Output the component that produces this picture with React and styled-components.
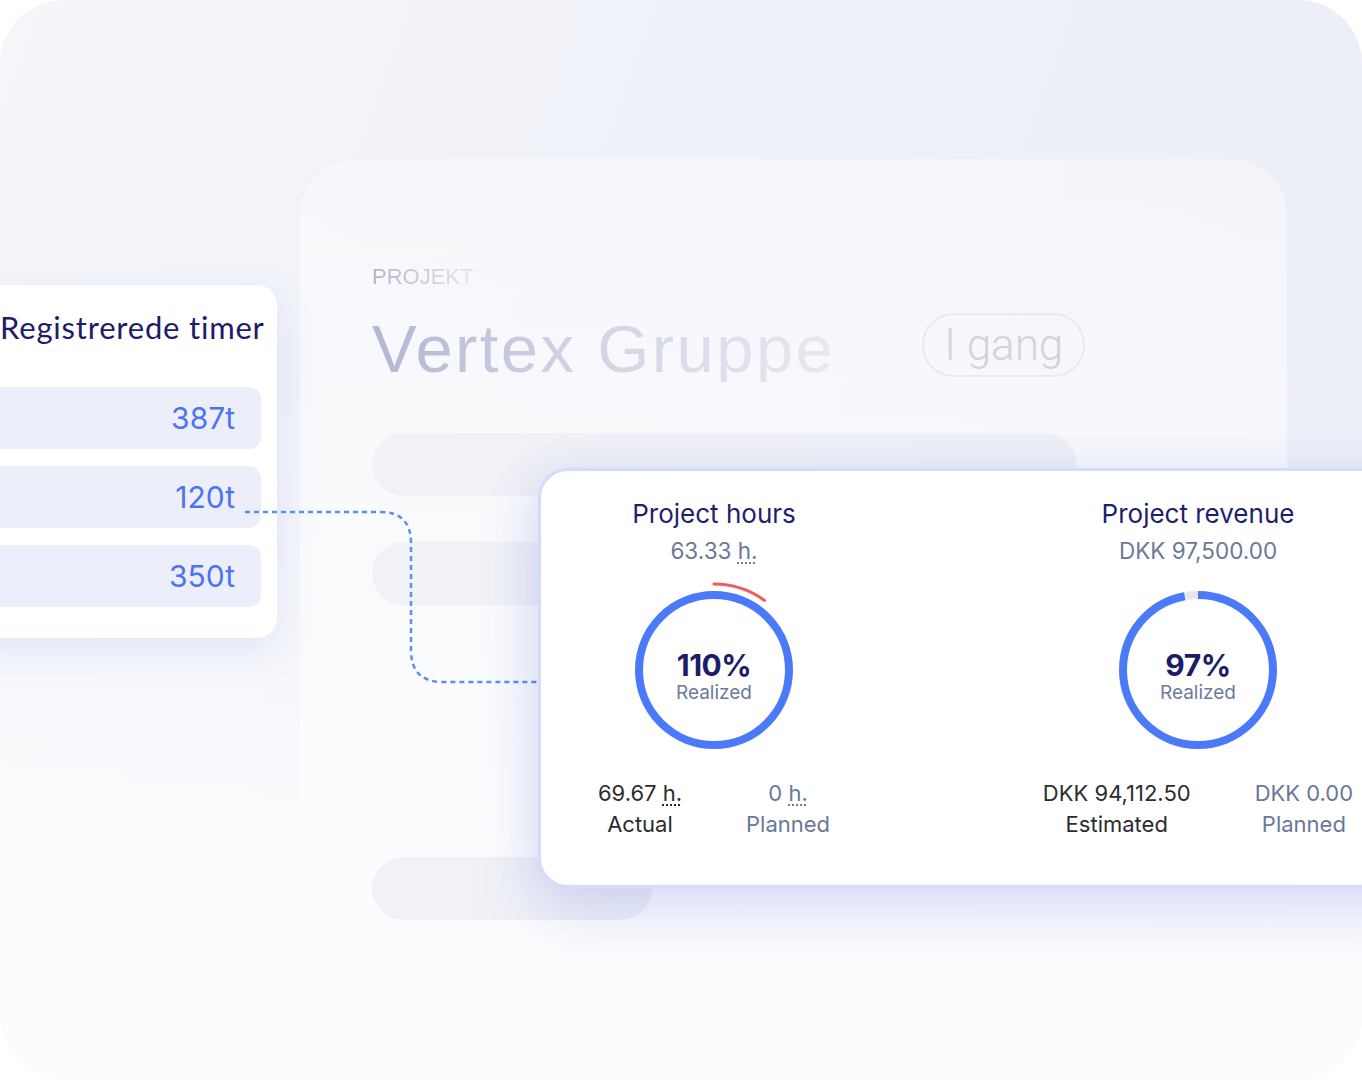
import React from 'react'
import styled, { createGlobalStyle } from 'styled-components'

const GlobalStyle = createGlobalStyle`
  html, body {
    margin: 0;
    padding: 0;
    background: #fff;
  }
  body {
    font-family: Inter, "Noto Sans", sans-serif;
  }
`

const Stage = styled.div`
  position: relative;
  width: 1362px;
  height: 1080px;
  overflow: hidden;
  background: #fff;
`

const Frame = styled.div`
  box-sizing: border-box;
  width: 100%;
  height: 100%;
  padding: 159px 0 0 300px;
  border-radius: 64px;
  overflow: hidden;
  background:
    linear-gradient(180deg, rgba(255,255,255,0) 35%, rgba(252,253,254,0.95) 85%),
    linear-gradient(110deg, #f4f6fa 0%, #eff1f8 40%, #eaedf7 100%);
`

const Sheet = styled.section`
  box-sizing: border-box;
  width: 987px;
  height: 1000px;
  padding: 105px 72px 0;
  border-radius: 56px 56px 0 0;
  background:
    linear-gradient(180deg, rgba(255,255,255,0) 0%, rgba(252,253,254,0.9) 70%),
    linear-gradient(100deg, #f7f8fb 0%, #f5f6fa 60%, #f2f4f9 100%);
`

const Eyebrow = styled.div`
  display: inline-block;
  font-family: "Liberation Sans", Arial, sans-serif;
  font-size: 22px;
  line-height: 26px;
  background: linear-gradient(90deg, #b2b4cf 0%, #e3e4ee 100%);
  -webkit-background-clip: text;
  background-clip: text;
  color: transparent;
`

const TitleRow = styled.div`
  display: flex;
  align-items: center;
  gap: 87px;
  margin-top: 23px;
  height: 64px;
`

const Title = styled.h1`
  margin: 0;
  font-family: "Liberation Sans", Arial, sans-serif;
  font-weight: 400;
  font-size: 67px;
  letter-spacing: 2.4px;
  line-height: 1;
  padding-top: 6px;
  background: linear-gradient(90deg, #b4b6d4 0%, #d2d3e4 45%, #e7e8f1 100%);
  -webkit-background-clip: text;
  background-clip: text;
  color: transparent;
`

const StatusPill = styled.span`
  box-sizing: border-box;
  display: flex;
  align-items: center;
  justify-content: center;
  width: 163px;
  height: 64px;
  border: 2px solid #e9eaf0;
  border-radius: 32px;
  font-family: Roboto, "Open Sans", sans-serif;
  font-weight: 300;
  font-size: 44px;
  color: #d3d4db;
`

const Skeleton = styled.div`
  width: ${p => p.$w}px;
  height: 63px;
  margin-top: ${p => p.$mt}px;
  border-radius: 32px;
  background: linear-gradient(90deg, #f1f2f7 0%, #eef0f6 100%);
`

const TimesPanel = styled.aside`
  position: absolute;
  left: -40px;
  top: 285px;
  box-sizing: border-box;
  width: 317px;
  height: 353px;
  padding: 22px 10px 0 40px;
  border-radius: 20px;
  background: #fff;
  box-shadow: 0 14px 40px rgba(96, 114, 214, 0.13);
`

const PanelTitle = styled.h2`
  margin: 0 0 40px;
  font-family: Lato, "Noto Sans", sans-serif;
  font-weight: 400;
  font-size: 31px;
  letter-spacing: 0.8px;
  line-height: 40px;
  color: #1d1c6a;
  white-space: nowrap;
`

const HourList = styled.div`
  display: flex;
  flex-direction: column;
  gap: 17px;
  margin-left: -14px;
  margin-right: 6px;
`

const HourRow = styled.div`
  display: flex;
  align-items: center;
  justify-content: flex-end;
  height: 62px;
  padding-right: 26px;
  border-radius: 12px;
  background: #eceff9;
  font-size: 30px;
  color: #4b73f6;
`

const Connector = styled.svg`
  position: absolute;
  left: 0;
  top: 0;
  pointer-events: none;
`

const Card = styled.div`
  position: absolute;
  left: 538px;
  top: 468px;
  box-sizing: border-box;
  width: 900px;
  height: 420px;
  padding-top: 27px;
  border: 3px solid #d3dcfc;
  border-radius: 30px;
  background: #fff;
  box-shadow: 0 26px 60px rgba(86, 104, 214, 0.18), -10px 0 40px rgba(86, 104, 214, 0.08);
  display: grid;
  grid-template-columns: 346px 346px;
  column-gap: 138px;
  align-content: start;
`

const Column = styled.div`
  display: flex;
  flex-direction: column;
  align-items: center;
`

const ColTitle = styled.div`
  font-size: 26px;
  line-height: 32px;
  color: #1f1f6d;
`

const ColTotal = styled.div`
  margin-top: 6px;
  font-size: 22.5px;
  line-height: 30px;
  color: #6b7898;
`

const Unit = styled.span`
  text-decoration: underline dotted;
  text-decoration-thickness: 2px;
  text-underline-offset: 3px;
`

const RingWrap = styled.div`
  display: grid;
  place-items: center;
  width: 180px;
  height: 180px;
  margin-top: 14px;
  & > * {
    grid-area: 1 / 1;
  }
`

const RingLabel = styled.div`
  display: flex;
  flex-direction: column;
  align-items: center;
  margin-top: 16px;
`

const Percent = styled.div`
  font-size: 30px;
  font-weight: 700;
  line-height: 30px;
  letter-spacing: -0.5px;
  color: #1d1c66;
`

const Realized = styled.div`
  font-size: 19px;
  line-height: 26px;
  color: #6d7a9b;
`

const StatRow = styled.div`
  display: flex;
  justify-content: center;
  gap: 64px;
  margin-top: 18px;
`

const Stat = styled.div`
  display: flex;
  flex-direction: column;
  align-items: center;
  font-size: 22px;
  line-height: 31px;
  color: ${p => (p.$muted ? '#6b7898' : '#2c2c30')};
  white-space: nowrap;
`

const R = 75
const CIRC = 2 * Math.PI * R

function Ring({ value }) {
  const shown = Math.min(value, 100)
  const over = Math.max(value - 100, 0)
  const angle = (over / 100) * 2 * Math.PI
  const ex = 90 + 86 * Math.sin(angle)
  const ey = 90 - 86 * Math.cos(angle)
  return (
    <svg width="180" height="180" viewBox="0 0 180 180">
      <circle cx="90" cy="90" r={R} fill="none" stroke="#e6e8f0" strokeWidth="8" />
      <circle
        cx="90"
        cy="90"
        r={R}
        fill="none"
        stroke="#4a7af8"
        strokeWidth="8"
        strokeDasharray={`${(shown / 100) * CIRC} ${CIRC}`}
        transform="rotate(-90 90 90)"
      />
      {over > 0 && (
        <path
          d={`M90 4 A86 86 0 0 1 ${ex.toFixed(2)} ${ey.toFixed(2)}`}
          fill="none"
          stroke="#f25a5e"
          strokeWidth="3"
          strokeLinecap="round"
        />
      )}
    </svg>
  )
}

function Metric({ title, total, value, stats }) {
  return (
    <Column>
      <ColTitle>{title}</ColTitle>
      <ColTotal>{total}</ColTotal>
      <RingWrap>
        <Ring value={value} />
        <RingLabel>
          <Percent>{value}%</Percent>
          <Realized>Realized</Realized>
        </RingLabel>
      </RingWrap>
      <StatRow>
        {stats.map(s => (
          <Stat key={s.label} $muted={s.muted}>
            <span>{s.amount}</span>
            <span>{s.label}</span>
          </Stat>
        ))}
      </StatRow>
    </Column>
  )
}

export default function App() {
  return (
    <>
      <GlobalStyle />
      <Stage>
        <Frame>
          <Sheet>
            <Eyebrow>PROJEKT</Eyebrow>
            <TitleRow>
              <Title>Vertex Gruppe</Title>
              <StatusPill>I gang</StatusPill>
            </TitleRow>
            <Skeleton $w={705} $mt={56} />
            <Skeleton $w={705} $mt={46} />
            <Skeleton $w={280} $mt={252} />
          </Sheet>
        </Frame>

        <TimesPanel>
          <PanelTitle>Registrerede timer</PanelTitle>
          <HourList>
            <HourRow>387t</HourRow>
            <HourRow>120t</HourRow>
            <HourRow>350t</HourRow>
          </HourList>
        </TimesPanel>

        <Connector width="560" height="700">
          <path
            d="M245 512 H380 Q411 512 411 543 V650 Q411 682 443 682 H540"
            fill="none"
            stroke="#5a8ef6"
            strokeWidth="2.5"
            strokeDasharray="5 4"
          />
        </Connector>

        <Card>
          <Metric
            title="Project hours"
            total={<>63.33 <Unit>h.</Unit></>}
            value={110}
            stats={[
              { amount: <>69.67 <Unit>h.</Unit></>, label: 'Actual' },
              { amount: <>0 <Unit>h.</Unit></>, label: 'Planned', muted: true },
            ]}
          />
          <Metric
            title="Project revenue"
            total="DKK 97,500.00"
            value={97}
            stats={[
              { amount: 'DKK 94,112.50', label: 'Estimated' },
              { amount: 'DKK 0.00', label: 'Planned', muted: true },
            ]}
          />
        </Card>
      </Stage>
    </>
  )
}
